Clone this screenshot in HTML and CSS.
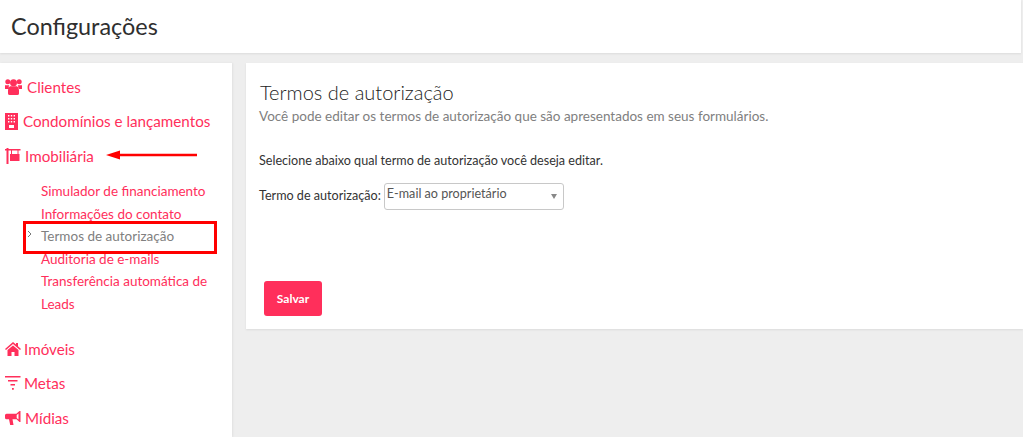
FILE: index.html
```html
<!DOCTYPE html>
<html lang="pt">
<head>
<meta charset="utf-8">
<title>Configurações</title>
<link rel="stylesheet" href="styles.css">
</head>
<body>
<header class="topbar"><h1>Configurações</h1></header>
<div class="layout">
  <nav class="sidebar">
    <a class="nav-item"><svg class="ico" width="17" height="16" viewBox="0 0 17 16"><circle cx="2.800" cy="2.800" r="2.500"/><circle cx="14.200" cy="2.800" r="2.500"/><circle cx="8.500" cy="3.700" r="3.500"/><path d="M0 6.200h4.200q-.8 1.600-.6 3.800H0zM17 6.200h-4.200q.8 1.600.6 3.800H17zM5 7.200h7q2 1.200 2 4v3.300q0 1.500-1.700 1.500H4.700Q3 16 3 14.500v-3.300q0-2.800 2-4z"/></svg><span>Clientes</span></a>
    <a class="nav-item nav-condo"><svg class="ico" width="13" height="17" viewBox="0 0 13 17"><path fill-rule="evenodd" d="M0 0h13v17H0zM3 2v1.400h1.400V2zm2.800 0v1.400h1.400V2zm2.800 0v1.400H10V2zM3 5v1.400h1.400V5zm2.800 0v1.400h1.400V5zm2.800 0v1.400H10V5zM3 8v1.400h1.400V8zm2.800 0v1.400h1.400V8zm2.800 0v1.400H10V8zM4 12v3h5v-3z"/></svg><span>Condomínios e lançamentos</span></a>
    <a class="nav-item nav-imob"><svg class="ico" width="16" height="16" viewBox="0 0 16 16"><path d="M0 1h15.500v1.500H0zM1.500 0h2v16h-2zM6 2.500h1V6.500H6zM12.500 2.500h1V6.500h-1zM5 6h9.500v7H5z"/></svg><span>Imobiliária</span></a>
    <ul class="subnav">
      <li><a>Simulador de financiamento</a></li>
      <li><a>Informações do contato</a></li>
      <li class="active"><svg class="chev" width="5" height="8" viewBox="0 0 5 8"><path d="M1 1l3 3-3 3" fill="none" stroke="#777" stroke-width="1"/></svg><a>Termos de autorização</a></li>
      <li><a>Auditoria de e-mails</a></li>
      <li><a>Transferência automática de Leads</a></li>
    </ul>
    <a class="nav-item nav-imoveis"><svg class="ico" width="16" height="14" viewBox="0 0 16 14"><path d="M8 0l3 2.600V1h2v3.300L16 7l-1 1-7-6-7 6-1-1zM8 3.400l5.500 4.700V14H9.500v-4h-3v4H2.500V8.100z"/></svg><span>Imóveis</span></a>
    <a class="nav-item nav-metas"><svg class="ico" width="16" height="14" viewBox="0 0 16 14"><path d="M0 0h15.500v1.500H0zM3 4h9.500v1.500H3zM5.500 8H10v1.500H5.500zM7 12h1.800v1.800H7z"/></svg><span>Metas</span></a>
    <a class="nav-item nav-midias"><svg class="ico" width="16" height="15" viewBox="0 0 16 15"><path fill-rule="evenodd" d="M14.500 0h1v11h-1l-3-2.800H7.500L8.500 14H5.200L4 8.200H1.500Q0 8.200 0 6.700V4.300Q0 2.800 1.500 2.800h9.800zM13.500 2.500l-1.800 1.600v2.800l1.800 1.600z"/></svg><span>Mídias</span></a>
  </nav>
  <main class="content">
    <section class="card">
      <h2>Termos de autorização</h2>
      <p class="lead">Você pode editar os termos de autorização que são apresentados em seus formulários.</p>
      <p class="hint">Selecione abaixo qual termo de autorização você deseja editar.</p>
      <div class="field">
        <label>Termo de autorização:</label>
        <div class="select"><span>E-mail ao proprietário</span><i class="caret"></i></div>
      </div>
      <button class="btn" type="button">Salvar</button>
    </section>
  </main>
</div>
<svg class="arrow" width="92" height="12" viewBox="0 0 92 12"><path d="M0 6L14 1.500V4.800H91V7.200H14V10.500z" fill="#f00"/></svg>
<div class="highlight"></div>
</body>
</html>
```
FILE: styles.css
```css
* { box-sizing: border-box; }
html, body { margin: 0; height: 100%; }
body {
  position: relative;
  height: 437px;
  overflow: hidden;
  background: #eeeeee;
  font-family: Lato, "Liberation Sans", sans-serif;
}
.topbar {
  width: 1021px;
  height: 53px;
  background: #fff;
  box-shadow: 0 1px 2px rgba(0,0,0,.08);
  padding: 12px 0 0 11px;
}
.topbar h1 {
  margin: 0;
  font-size: 23.400px;
  line-height: 29px;
  font-weight: 400;
  color: #2f2f2f;
}
.layout {
  display: flex;
  gap: 14px;
  margin-top: 10px;
  height: 374px;
}
.sidebar {
  width: 232px;
  flex: none;
  background: #fff;
  padding: 13px 0 0 5px;
  box-shadow: 1px 0 2px rgba(0,0,0,.06);
}
.nav-item {
  display: flex;
  align-items: center;
  height: 22px;
  margin-bottom: 12px;
  color: #ff2f5b;
  font-size: 15.200px;
  white-space: nowrap;
}
.ico { fill: #ff2f5b; flex: none; margin-right: 4px; }
.nav-item:first-child .ico { margin-right: 5px; }
.nav-condo { margin-bottom: 13px; }
.nav-condo .ico { margin-right: 5px; }
.nav-imob { margin-bottom: 13px; }
.subnav {
  list-style: none;
  margin: 0 0 23px;
  padding: 0 0 0 36px;
  width: 212px;
  font-size: 13.500px;
  line-height: 22.500px;
  color: #ff2f5b;
}
.subnav li { position: relative; }
.subnav .active { color: #808080; }
.chev { position: absolute; left: -14px; top: 5px; }
.nav-imoveis { margin-bottom: 12px; }
.nav-imoveis .ico, .nav-metas .ico { margin-right: 3px; }
.nav-metas { margin-bottom: 13px; }
.content { flex: 1; }
.card {
  height: 266px;
  background: #fff;
  box-shadow: 0 1px 2px rgba(0,0,0,.08);
  padding: 17px 13px 0;
}
.card h2 {
  margin: 0 0 0 1px;
  font-size: 20px;
  line-height: 24px;
  font-weight: 300;
  color: #222;
}
.lead {
  margin: 3px 0 0;
  font-size: 13.500px;
  line-height: 18px;
  color: #808080;
}
.hint {
  margin: 28px 0 0;
  font-size: 12.600px;
  line-height: 16px;
  color: #333;
}
.field {
  display: flex;
  align-items: flex-start;
  gap: 3px;
  margin-top: 14px;
  font-size: 12.600px;
  line-height: 16px;
  color: #333;
}
.field label { padding-top: 5px; }
.select {
  position: relative;
  width: 180px;
  height: 27px;
  border: 1px solid #c8c8c8;
  border-radius: 3px;
  padding: 2px;
  font-size: 12.600px;
  color: #555;
}
.caret {
  position: absolute;
  right: 6px;
  top: 10px;
  border: 3px solid transparent;
  border-top: 5px solid #888;
  border-bottom: 0;
}
.btn {
  display: block;
  width: 58px;
  height: 35px;
  margin: 71px 0 0 5px;
  border: 0;
  border-radius: 3px;
  background: #ff2f5b;
  color: #fff;
  font: 700 12px Lato, "Liberation Sans", sans-serif;
}
.arrow { position: absolute; left: 106px; top: 149px; }
.highlight {
  position: absolute;
  left: 23px;
  top: 221px;
  width: 194px;
  height: 33px;
  border: 3px solid #f00;
}
```
